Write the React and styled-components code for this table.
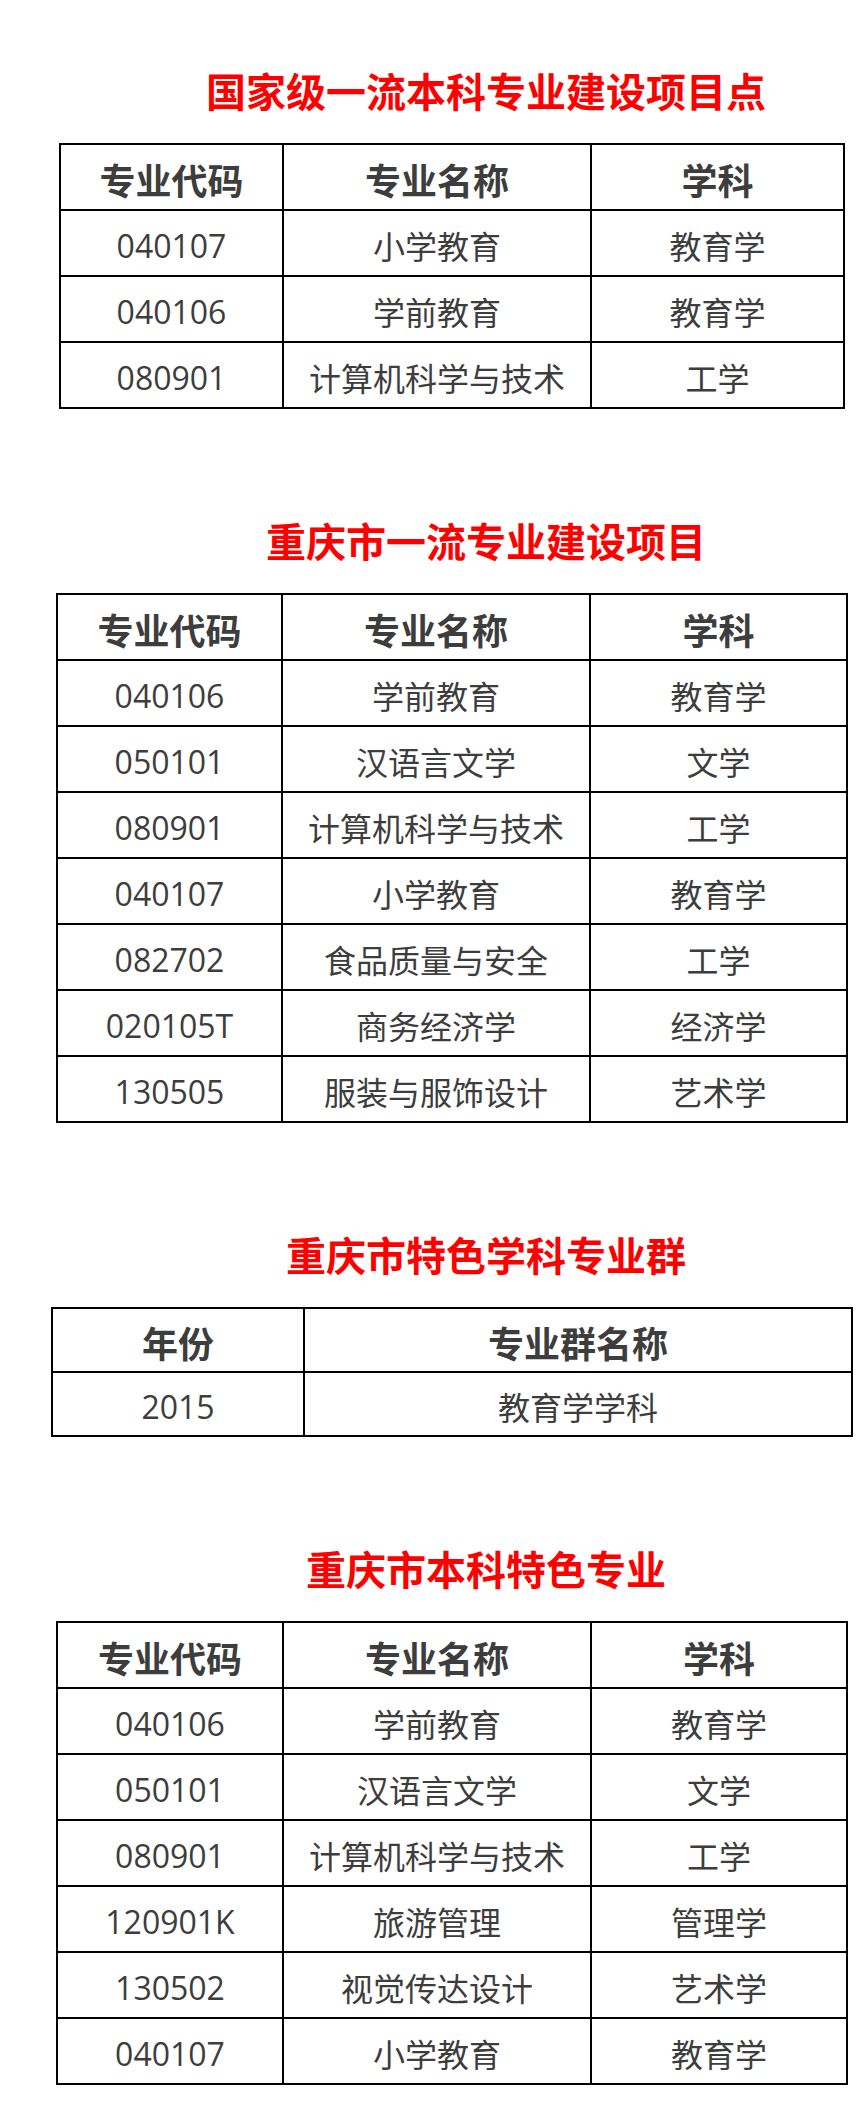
import styled, { createGlobalStyle } from "styled-components";

const GlobalStyle = createGlobalStyle`
  html, body {
    margin: 0;
    padding: 0;
    background: #fff;
  }
  body {
    font-family: "Open Sans", "Noto Sans CJK SC", sans-serif;
  }
`;

const Page = styled.div`
  width: 865px;
  padding-top: 60px;
  padding-left: 39px;
  box-sizing: border-box;
  display: flex;
  flex-direction: column;
  align-items: center;
  gap: 101px;
`;

const Section = styled.section`
  display: flex;
  flex-direction: column;
  align-items: center;
  width: 100%;
`;

const Title = styled.h2`
  margin: 0 0 23px;
  padding-left: 68px;
  height: 60px;
  line-height: 60px;
  font-size: 40px;
  font-weight: 700;
  color: #fe0000;
  font-family: "Noto Sans CJK SC", sans-serif;
  white-space: nowrap;
`;

const Grid = styled.div`
  display: grid;
  grid-template-columns: ${(p) => p.$cols};
  border-top: 2px solid #000;
  border-left: 2px solid #000;
`;

const Cell = styled.div`
  box-sizing: border-box;
  height: ${(p) => p.$h}px;
  border-right: 2px solid #000;
  border-bottom: 2px solid #000;
  display: flex;
  align-items: center;
  justify-content: center;
  color: #3d3d3d;
  font-size: ${(p) => (p.$head ? 36 : 32)}px;
  font-weight: ${(p) => (p.$head ? 700 : 400)};
  font-family: ${(p) =>
    p.$head
      ? '"Noto Sans CJK SC", sans-serif'
      : '"Open Sans", "Noto Sans CJK SC", sans-serif'};
  white-space: nowrap;
  padding-top: 4px;
`;

const majorHead = ["专业代码", "专业名称", "学科"];

const sections = [
  {
    title: "国家级一流本科专业建设项目点",
    cols: "223px 308px 253px",
    rowH: 66,
    head: majorHead,
    rows: [
      ["040107", "小学教育", "教育学"],
      ["040106", "学前教育", "教育学"],
      ["080901", "计算机科学与技术", "工学"],
    ],
  },
  {
    title: "重庆市一流专业建设项目",
    cols: "225px 308px 257px",
    rowH: 66,
    head: majorHead,
    rows: [
      ["040106", "学前教育", "教育学"],
      ["050101", "汉语言文学", "文学"],
      ["080901", "计算机科学与技术", "工学"],
      ["040107", "小学教育", "教育学"],
      ["082702", "食品质量与安全", "工学"],
      ["020105T", "商务经济学", "经济学"],
      ["130505", "服装与服饰设计", "艺术学"],
    ],
  },
  {
    title: "重庆市特色学科专业群",
    cols: "252px 548px",
    rowH: 64,
    head: ["年份", "专业群名称"],
    rows: [["2015", "教育学学科"]],
  },
  {
    title: "重庆市本科特色专业",
    cols: "226px 308px 256px",
    rowH: 66,
    head: majorHead,
    rows: [
      ["040106", "学前教育", "教育学"],
      ["050101", "汉语言文学", "文学"],
      ["080901", "计算机科学与技术", "工学"],
      ["120901K", "旅游管理", "管理学"],
      ["130502", "视觉传达设计", "艺术学"],
      ["040107", "小学教育", "教育学"],
    ],
  },
];

export default function App() {
  return (
    <>
      <GlobalStyle />
      <Page>
        {sections.map((s) => (
          <Section key={s.title}>
            <Title>{s.title}</Title>
            <Grid $cols={s.cols}>
              {s.head.map((h) => (
                <Cell key={h} $head $h={s.rowH}>
                  {h}
                </Cell>
              ))}
              {s.rows.map((r, i) =>
                r.map((v, j) => (
                  <Cell key={i + "-" + j} $h={s.rowH}>
                    {v}
                  </Cell>
                ))
              )}
            </Grid>
          </Section>
        ))}
      </Page>
    </>
  );
}
